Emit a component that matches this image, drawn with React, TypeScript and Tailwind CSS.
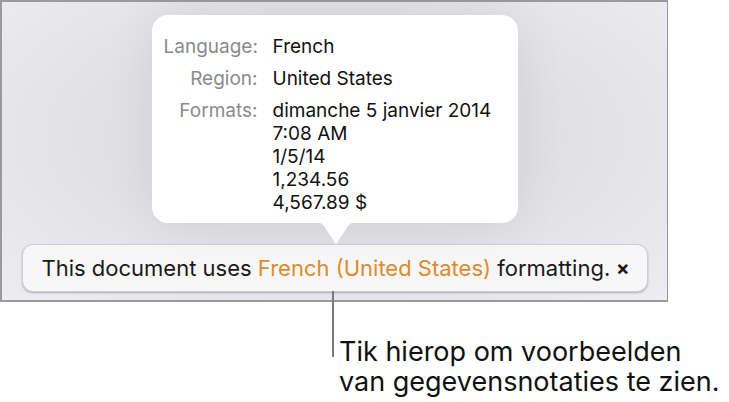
export default function App() {
  const font = { fontFamily: 'Inter, "Noto Sans", sans-serif' };
  return (
    <div className="relative w-[729px] h-[402px] bg-white overflow-hidden" style={font}>
      {/* app panel */}
      <div className="relative w-[668px] h-[302px] border-l-2 border-t-2 border-r border-b-2 border-[#9a9a9e] bg-[radial-gradient(ellipse_at_50%_45%,#d9d9dd_0%,#e1e1e5_50%,#ededf1_100%)] flex flex-col items-center">
        {/* popover */}
        <div className="relative mt-[13px] w-[366px] h-[208px] rounded-[16px] bg-white pt-[20px] pl-[12px] shadow-[0_0_50px_rgba(0,0,0,0.07)] text-[19px] leading-[23px] text-[#111]">
          <div className="grid grid-cols-[94px_1fr] gap-x-[15px] gap-y-[9px]">
            <div className="text-right text-[#8a8a8e]">Language:</div>
            <div>French</div>
            <div className="text-right text-[#8a8a8e]">Region:</div>
            <div>United States</div>
            <div className="text-right text-[#8a8a8e]">Formats:</div>
            <div className="flex flex-col">
              <span>dimanche 5 janvier 2014</span>
              <span>7:08 AM</span>
              <span>1/5/14</span>
              <span>1,234.56</span>
              <span>4,567.89 $</span>
            </div>
          </div>
          <svg
            className="absolute left-[158px] top-[206px]"
            width="52"
            height="25"
            viewBox="0 0 52 25"
          >
            <path d="M0 0 C8 0 10 1 14 5 L26 23.5 L38 5 C42 1 44 0 52 0 Z" fill="#ffffff" />
          </svg>
        </div>
        {/* banner */}
        <div className="mt-[21px] w-[626px] h-[48px] rounded-[11px] bg-[#f7f7f7] border border-[#cfcfd2] shadow-[0_1px_2px_rgba(0,0,0,0.25)] flex items-center pl-[19px] pr-[17px] text-[22px] text-[#1a1a1a]">
          <span className="flex-1 whitespace-nowrap">
            This document uses <span className="text-[#df8a2e]">French (United States)</span> formatting.
          </span>
          <span className="text-[20px] font-bold leading-none">×</span>
        </div>
      </div>
      {/* callout */}
      <div className="absolute left-[332px] top-[291px] w-[1.5px] h-[66px] bg-[#7a7a7a]" />
      <div className="ml-[339px] mt-[35px] text-[27px] leading-[30px] text-[#111] whitespace-nowrap">
        <div>Tik hierop om voorbeelden</div>
        <div>van gegevensnotaties te zien.</div>
      </div>
    </div>
  );
}
